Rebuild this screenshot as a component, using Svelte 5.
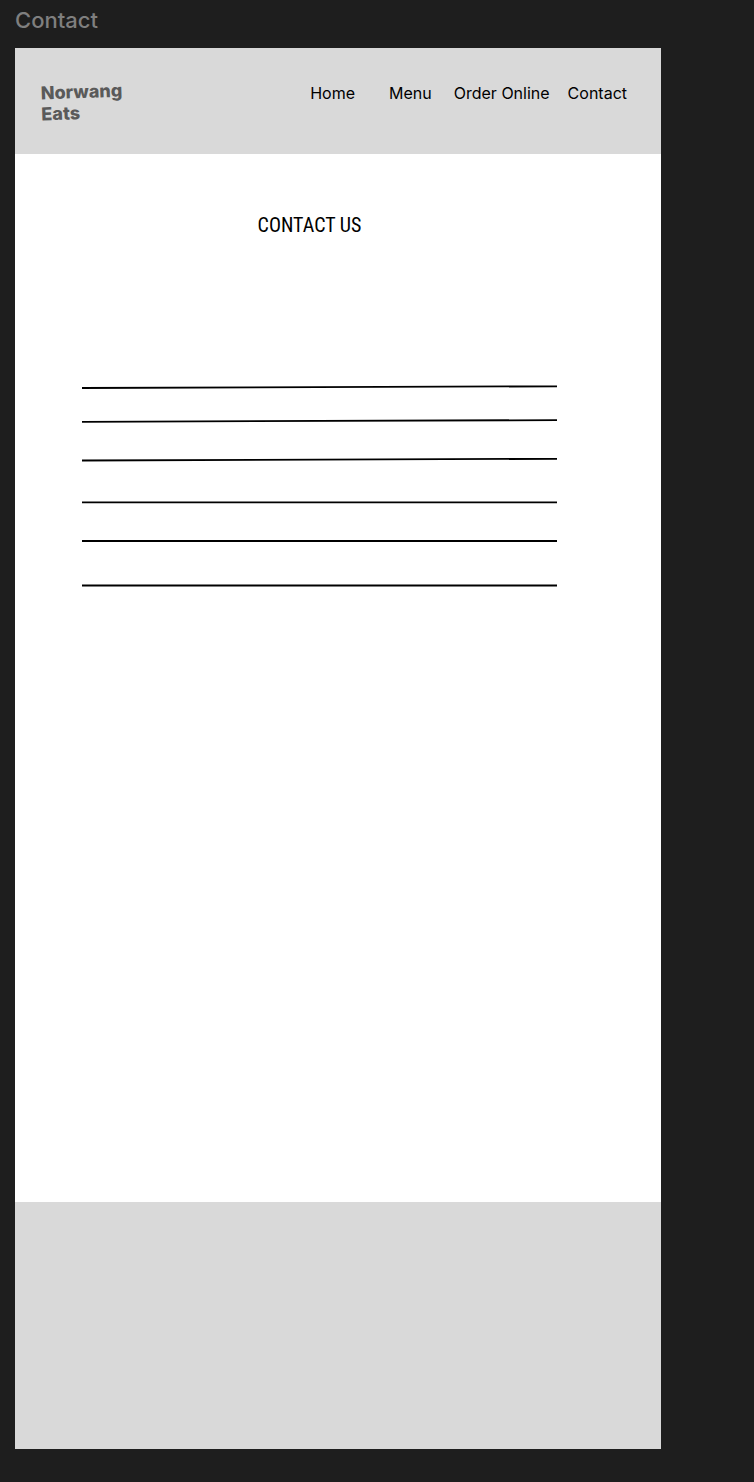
<script>
  const links = ['Home', 'Menu', 'Order Online', 'Contact'];

  // Start and end heights of each ruled line.
  const rules = [
    [13, 11.3],
    [46.8, 45.1],
    [85.5, 83.8],
    [127.4, 127.4],
    [166, 166],
    [210.5, 210.5],
  ];
</script>

<div class="canvas">
  <p class="frame-name">Contact</p>

  <div class="frame">
    <header>
      <a class="brand" href="#home">Norwang<br />Eats</a>
      <nav aria-label="Main">
        {#each links as link}
          <a href="#{link.toLowerCase().replace(' ', '-')}">{link}</a>
        {/each}
      </nav>
    </header>

    <main>
      <h1>CONTACT US</h1>
      <svg class="rules" viewBox="0 0 475 220" preserveAspectRatio="none" aria-hidden="true">
        {#each rules as [start, end]}
          <line x1="0" y1={start} x2="475" y2={end} />
        {/each}
      </svg>
    </main>

    <footer></footer>
  </div>
</div>

<style>
  :global(body) {
    margin: 0;
    background: #1e1e1e;
  }

  .canvas {
    box-sizing: border-box;
    min-height: 100vh;
    display: flex;
    flex-direction: column;
    padding: 7px 93px 33px 15px;
    font-family: Inter, 'Liberation Sans', sans-serif;
  }

  .frame-name {
    margin: 0 0 15px;
    color: #7f7f7f;
    font-size: 22px;
    font-weight: 500;
    line-height: 26px;
  }

  .frame {
    flex: 1;
    display: flex;
    flex-direction: column;
    background: #fff;
  }

  header {
    display: flex;
    justify-content: space-between;
    align-items: flex-start;
    padding: 33px 34px 31px 26px;
    background: #d9d9d9;
  }

  a {
    color: #000;
    text-decoration: none;
  }

  .brand {
    color: #5a5a5a;
    font-size: 18px;
    font-weight: 800;
    line-height: 21px;
    transform: rotate(-2deg);
  }

  nav {
    display: flex;
    gap: 18px;
    font-size: 16px;
    line-height: 24px;
    white-space: nowrap;
  }

  nav a:nth-child(1) {
    margin-right: 16px;
  }

  nav a:nth-child(2) {
    margin-right: 4px;
  }

  main {
    flex: 1;
    padding: 58px 104px 0 67px;
  }

  h1 {
    margin: 0 0 137px;
    padding-right: 20px;
    font-family: 'Roboto Condensed', Roboto, sans-serif;
    font-size: 20px;
    font-weight: 400;
    line-height: 26px;
    text-align: center;
  }

  .rules {
    display: block;
    width: 100%;
    height: 220px;
  }

  .rules line {
    stroke: #000;
    stroke-width: 1.8;
    vector-effect: non-scaling-stroke;
  }

  footer {
    min-height: 247px;
    background: #d9d9d9;
  }
</style>
